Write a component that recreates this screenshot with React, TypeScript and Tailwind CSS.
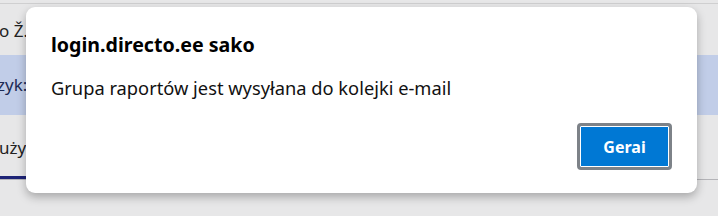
import React from 'react';

const font = { fontFamily: '"Segoe UI", "Noto Sans", "Liberation Sans", sans-serif' };

const AlertDialog: React.FC = () => {
  return (
    <div
      className="absolute left-[26px] top-[7px] flex h-[186px] w-[671px] flex-col rounded-[9px] bg-white px-[25px] pt-[24px] shadow-[0_4px_10px_rgba(0,0,0,0.28)]"
      style={font}
    >
      {/* Título */}
      <h1 className="text-[19.6px] font-bold leading-[28px] text-black">login.directo.ee sako</h1>
      {/* Mensaje */}
      <p className="mt-[17px] text-[18.3px] leading-[24px] text-[#111]">
        Grupa raportów jest wysyłana do kolejki e-mail
      </p>
      <div className="mt-auto mb-[23px] flex justify-end">
        <button className="h-[47px] w-[95px] rounded-[4px] border-[3px] border-[#7d8288] bg-[#0078d4] p-0">
          <span className="flex h-full w-full items-center justify-center rounded-[1px] border border-white text-[16px] font-bold text-white">
            Gerai
          </span>
        </button>
      </div>
    </div>
  );
};

export default function App() {
  return (
    <div className="relative h-[216px] w-[718px] overflow-hidden bg-[#e7e7e8]" style={font}>
      {/* Página de fondo */}
      <div className="flex h-full flex-col">
        <div className="mt-[3px] h-[1px] bg-[#cfcfd0]" />
        <div className="flex h-[51px] items-center text-[17px] text-[#222]">
          <span className="-ml-[1px] pt-[2px]">o Ž.</span>
        </div>
        <div className="flex h-[60px] items-center bg-[#c1cde8] text-[17px] text-[#1d2a55]">
          <span className="-ml-[3px]">zyk:</span>
        </div>
        <div className="flex h-[61px] items-center text-[17px] text-[#222]">
          <span className="-ml-[1px] pt-[4px]">użyt</span>
        </div>
        <div className="h-[3px] w-[26px] bg-[#1e2477]" />
        <div className="h-[1px] bg-[#b4b4b8]" />
      </div>
      <AlertDialog />
    </div>
  );
}
